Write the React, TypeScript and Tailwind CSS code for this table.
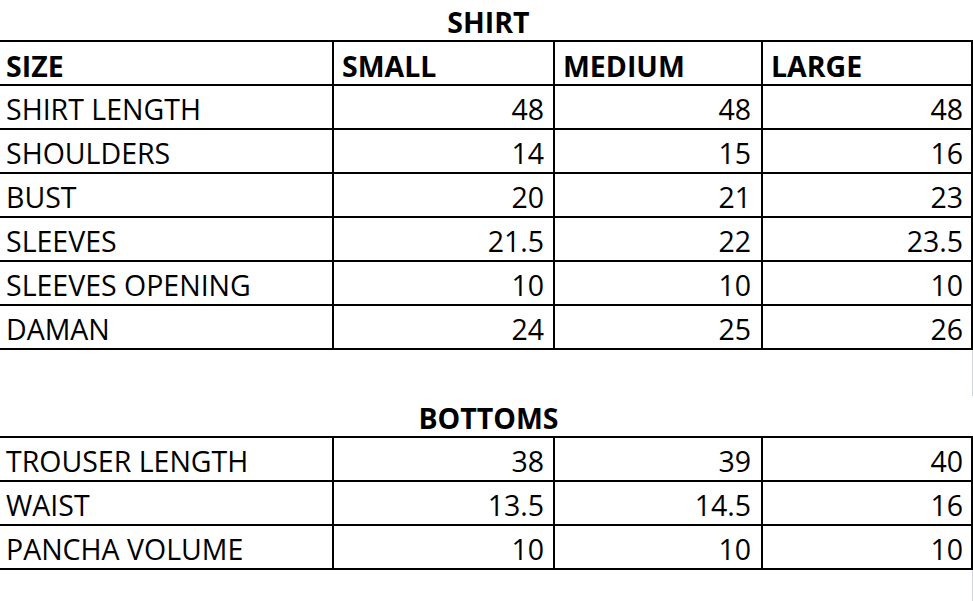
const shirtRows: [string, string, string, string][] = [
  ["SHIRT LENGTH", "48", "48", "48"],
  ["SHOULDERS", "14", "15", "16"],
  ["BUST", "20", "21", "23"],
  ["SLEEVES", "21.5", "22", "23.5"],
  ["SLEEVES OPENING", "10", "10", "10"],
  ["DAMAN", "24", "25", "26"],
];

const bottomRows: [string, string, string, string][] = [
  ["TROUSER LENGTH", "38", "39", "40"],
  ["WAIST", "13.5", "14.5", "16"],
  ["PANCHA VOLUME", "10", "10", "10"],
];

const rowClass =
  "grid grid-cols-[332px_221px_208px_212px] grid-rows-[42px] h-[44px] border-b-2 border-black";

const Row = ({ cells }: { cells: [string, string, string, string] }) => (
  <div className={rowClass + " leading-[46px]"}>
    <div className="pl-[6px] whitespace-nowrap">{cells[0]}</div>
    <div className="border-l-2 border-black pr-[9px] text-right">{cells[1]}</div>
    <div className="border-l-2 border-black pr-[10px] text-right">{cells[2]}</div>
    <div className="border-l-2 border-r-2 border-black pr-[8px] text-right">{cells[3]}</div>
  </div>
);

const Title = ({ children }: { children: string }) => (
  <div className="h-[40px] pt-[2px] text-center font-bold leading-[40px] pl-[4px]">{children}</div>
);

export default function App() {
  return (
    <div
      className="w-[973px] h-[601px] overflow-hidden bg-white text-black text-[28.5px]"
      style={{ fontFamily: '"Open Sans", "Liberation Sans", sans-serif' }}
    >
      <Title>SHIRT</Title>
      <div className="border-t-2 border-black">
        <div className={rowClass + " font-bold leading-[48px]"}>
          <div className="pl-[6px]">SIZE</div>
          <div className="border-l-2 border-black pl-[8px]">SMALL</div>
          <div className="border-l-2 border-black pl-[8px]">MEDIUM</div>
          <div className="border-l-2 border-r-2 border-black pl-[8px]">LARGE</div>
        </div>
        {shirtRows.map((r) => (
          <Row key={r[0]} cells={r} />
        ))}
      </div>

      <div className="flex justify-end">
        <div className="h-[46px] w-px bg-gray-300" />
      </div>

      <Title>BOTTOMS</Title>
      <div className="border-t-2 border-black">
        {bottomRows.map((r) => (
          <Row key={r[0]} cells={r} />
        ))}
      </div>
      <div className="flex justify-end">
        <div className="h-[40px] w-px bg-gray-300" />
      </div>
    </div>
  );
}
